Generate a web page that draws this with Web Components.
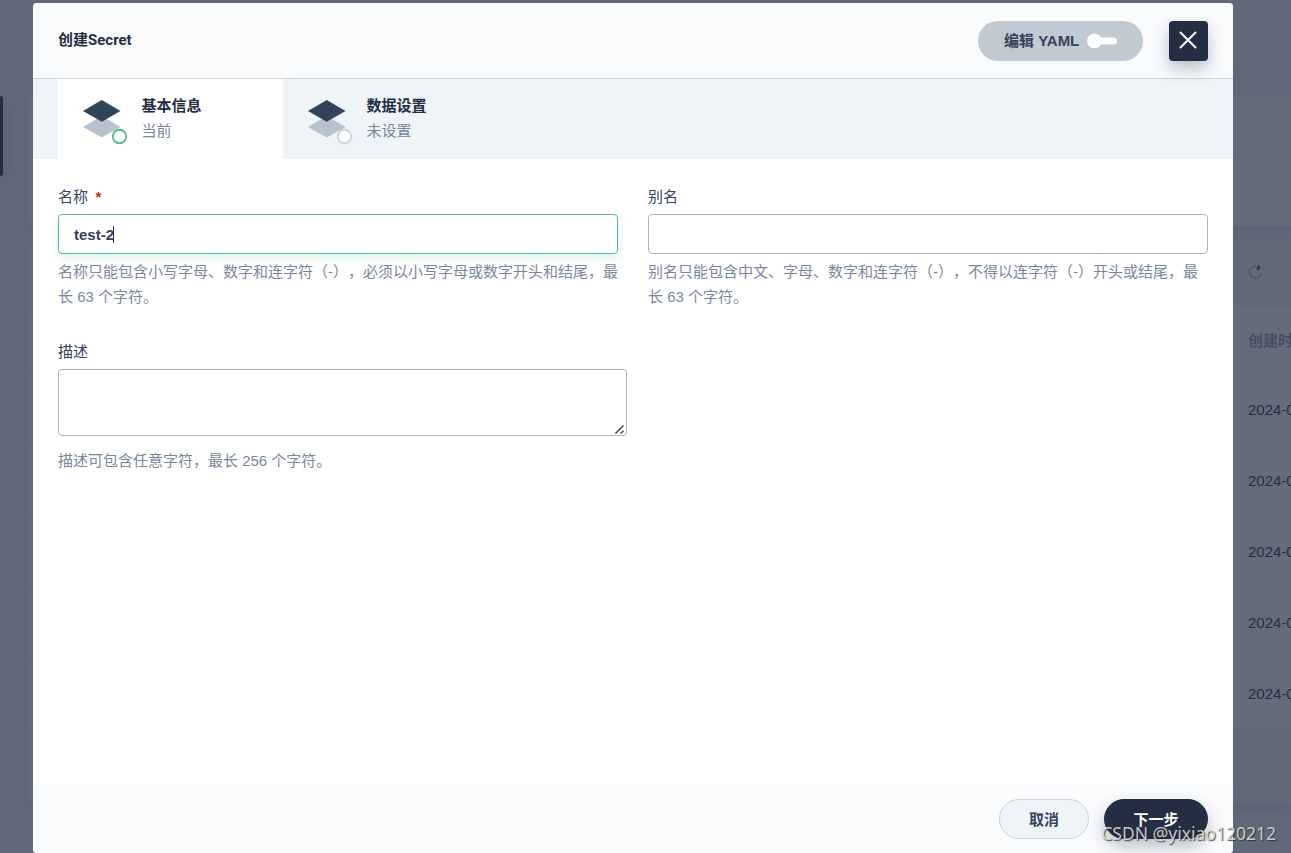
<!DOCTYPE html>
<html lang="zh-CN">
<head>
<meta charset="utf-8">
<title>创建Secret</title>
<style>
html,body{margin:0;height:100%;overflow:hidden}
body{font:15px/25px "Liberation Sans","Noto Sans CJK SC",sans-serif;color:#36435c;text-spacing-trim:space-all}
</style>
</head>
<body>
<secret-app></secret-app>
<script>
const define = (name, html) => customElements.define(name, class extends HTMLElement {
  constructor() {
    super();
    this.attachShadow({ mode: 'open' }).innerHTML = '<style>*{box-sizing:border-box}</style>' + html;
  }
});

define('list-row', `
<style>
:host{display:flex;align-items:center;justify-content:flex-end;height:71px;border-bottom:1px solid #606c79;color:#242e42;box-sizing:border-box}
span{width:43px;white-space:nowrap;overflow:hidden;height:25px;line-height:25px}
</style><span><slot></slot></span>`);

define('list-page', `
<style>
:host{display:block;height:853px;background:#5f6978;overflow:hidden}
.top{height:70px;border-bottom:1px solid #5c6676}
.body{display:flex;padding-top:26px}
.nav{width:3px;height:80px;background:#242e42;border-radius:0 3px 3px 0;box-shadow:0 4px 12px rgba(36,46,66,.2);margin-right:25px}
.cards{flex:1}
.card{background:#656b79;border-radius:4px 0 0 4px;box-shadow:0 4px 8px rgba(36,46,66,.07)}
.summary{height:130px;margin-bottom:15px}
.table{height:563px}
.tools{height:66px;background:#616b78;border-bottom:1px solid #5e6a77;display:flex;justify-content:flex-end;align-items:center;padding-bottom:5px}
.tools svg{width:16px;height:18px;margin-right:27px}
.head{height:67px;font-weight:700;color:#454f63}
.foot{height:75px;background:#626a78}
</style>
<div class="top"></div>
<div class="body"><div class="nav"></div><div class="cards">
<div class="card summary"></div>
<div class="card table">
<div class="tools"><svg viewBox="0 0 16 18"><path d="M8.5 4.2A6 6 0 1 0 13.4 10.5" fill="none" stroke="#4c576a" stroke-width="1.4"/><path d="M10.7 2L12.6 6.8 8.2 8.2z" fill="#2c384d"/></svg></div>
<list-row class="head">创建时间</list-row>
<list-row>2024-04-10</list-row><list-row>2024-04-10</list-row><list-row>2024-04-10</list-row><list-row>2024-04-10</list-row><list-row>2024-04-10</list-row>
<div class="foot"></div>
</div></div></div>`);

define('yaml-switch', `
<style>
:host{display:flex;align-items:center;width:165px;height:40px;border-radius:20px;background:#c1c9d1;padding-left:26px;font-weight:700;color:#36435c;line-height:40px;white-space:nowrap;box-sizing:border-box}
svg{width:32px;height:20px;margin-left:7px}
</style><slot></slot><svg viewBox="0 0 32 20"><rect x="8" y="6.5" width="23" height="7" rx="3.5" fill="#fff"/><circle cx="8.5" cy="10.8" r="7.5" fill="#242e42" opacity=".08"/><circle cx="8.5" cy="10" r="7.5" fill="#fff"/></svg>`);

define('close-button', `
<style>
:host{display:flex;align-items:center;justify-content:center;width:39px;height:40px;border-radius:4px;background:#242e42;box-shadow:0 8px 16px rgba(36,46,66,.28)}
svg{width:20px;height:20px;margin:0 1px 2px 0}
</style><svg viewBox="0 0 20 20"><path d="M2.5 2.5l15 15M17.5 2.5l-15 15" stroke="#fff" stroke-width="2" stroke-linecap="round"/></svg>`);

define('step-tab', `
<style>
:host{display:flex;width:225px;height:80px;padding-left:25px;box-sizing:border-box}
:host([current]){background:#fff}
svg{width:46px;height:46px;margin:20px 12.5px 0 0}
circle{stroke:#ccd3db;fill:#fff}
:host([current]) circle{stroke:#55bc8a}
.t{padding-top:14px}
b{display:block;color:#242e42}
span{display:block;color:#79879c}
</style>
<svg viewBox="0 0 46 46"><path d="M0 28L18.8 17 37.5 28 18.8 38.5z" fill="#b6c2cd"/><path d="M0 12L18.8 1 37.5 12 18.8 22.7z" fill="#324558"/><circle cx="36.5" cy="37.5" r="6.7" stroke-width="1.9"/></svg>
<div class="t"><b><slot></slot></b><span><slot name="state"></slot></span></div>`);

define('form-field', `
<style>
:host{display:block;width:560px}
.label{height:25px;line-height:25px;color:#36435c;margin-bottom:5px}
.label i{display:none;font-style:normal;font-weight:700;color:#ca2621;margin-left:7.5px}
:host([required]) .label i{display:inline}
.box{display:flex;align-items:center;height:40px;border:1px solid #abb4be;border-radius:4px;padding-left:15px;background:#fff;font-weight:700;color:#36435c}
:host([focused]) .box{border-color:#55bc8a;box-shadow:0 4px 8px rgba(85,188,138,.2)}
.caret{display:none;width:1px;height:17px;background:#242e42;margin-left:-1px}
:host([focused]) .caret{display:block}
.box svg{display:none;width:11px;height:11px;margin-left:auto}
:host([multiline]) .box{width:569px;height:67px;align-items:flex-end;padding:0 1px 0 0;margin-bottom:12px}
:host([multiline]) svg{display:block}
.help{margin-top:5px;color:#79879c;line-height:25px;white-space:nowrap}
</style>
<div class="label"><slot name="label"></slot><i>*</i></div>
<div class="box"><slot></slot><span class="caret"></span><svg viewBox="0 0 11 11"><path d="M1.5 9.5L9.5 1.5M6.5 9.5L9.5 6.8" stroke="#444" stroke-width="1.5"/></svg></div>
<div class="help"><slot name="help"></slot></div>`);

define('pill-button', `
<style>
:host{display:flex;align-items:center;justify-content:center;width:90px;height:40px;box-sizing:border-box;border:1px solid #ccd3db;border-radius:20px;background:#eff4f9;color:#36435c;font-weight:700}
:host([primary]){width:104px;border-color:#242e42;background:#242e42;color:#fff;box-shadow:0 8px 16px rgba(36,46,66,.28)}
</style><slot></slot>`);

define('modal-dialog', `
<style>
:host{display:flex;flex-direction:column;width:1200px;height:850px;background:#fff;border-radius:4px;overflow:hidden}
header{display:flex;align-items:flex-start;height:76px;flex:none;padding:18px 25px 0;background:#f9fbfd;border-bottom:1px solid #ccd3db;position:relative;z-index:1}
h1{font:700 15px/25px Roboto,"Noto Sans CJK SC",sans-serif;color:#242e42;margin:7px auto 0 0}
close-button{margin-left:26px}
nav{display:flex;flex:none;height:80px;padding-left:25px;background:#eff4f9}
main{flex:1;display:grid;grid-template-columns:560px 560px;column-gap:30px;row-gap:30px;align-content:start;padding:25px}
footer{display:flex;justify-content:flex-end;gap:15px;flex:none;height:69px;padding:15px 25px;background:#f9fbfd}
</style>
<header><h1>创建Secret</h1><yaml-switch>编辑 YAML</yaml-switch><close-button></close-button></header>
<nav><step-tab current>基本信息<span slot="state">当前</span></step-tab><step-tab>数据设置<span slot="state">未设置</span></step-tab></nav>
<main>
<form-field required focused><span slot="label">名称</span>test-2<span slot="help">名称只能包含小写字母、数字和连字符（-），必须以小写字母或数字开头和结尾，最<br>长 63 个字符。</span></form-field>
<form-field><span slot="label">别名</span><span slot="help">别名只能包含中文、字母、数字和连字符（-），不得以连字符（-）开头或结尾，最<br>长 63 个字符。</span></form-field>
<form-field multiline><span slot="label">描述</span><span slot="help">描述可包含任意字符，最长 256 个字符。</span></form-field>
</main>
<footer><pill-button>取消</pill-button><pill-button primary>下一步</pill-button></footer>`);

define('water-mark', `
<style>
:host{display:block;font:17.5px/20px "Noto Sans",sans-serif;color:rgba(225,225,225,.85);text-shadow:1px 1px 1px rgba(40,40,40,.8);white-space:nowrap}
</style><slot></slot>`);

define('secret-app', `
<style>
:host{display:block;position:relative;width:1291px;height:853px;overflow:hidden}
modal-dialog{position:absolute;left:33px;top:3px}
water-mark{position:absolute;right:15px;bottom:10px}
</style>
<list-page></list-page><modal-dialog></modal-dialog><water-mark>CSDN @yixiao120212</water-mark>`);
</script>
</body>
</html>
